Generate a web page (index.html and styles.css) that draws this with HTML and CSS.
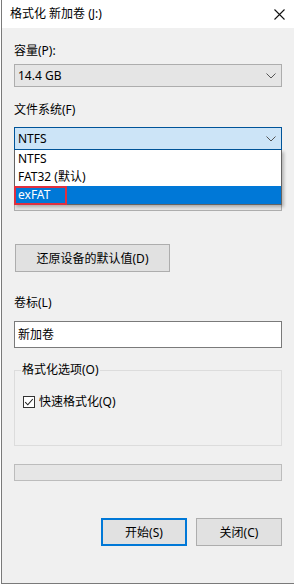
FILE: index.html
```html
<!DOCTYPE html>
<html lang="zh-CN">
<head>
    <meta charset="UTF-8">
    <meta name="viewport" content="width=device-width, initial-scale=1.0">
    <title>格式化 新加卷 (J:)</title>
    <link rel="stylesheet" href="styles.css">
</head>
<body>
    <div class="window">
        <div class="titlebar">
            <span class="title">格式化 新加卷 (J:)</span>
            <svg class="close" width="11" height="11" viewBox="0 0 11 11">
                <path d="M0.5 0.5L10.5 10.5M10.5 0.5L0.5 10.5" stroke="#111" stroke-width="1.1" fill="none"/>
            </svg>
        </div>
        <div class="content">
            <div class="label label-cap">容量(P):</div>
            <div class="combo">
                <span>14.4 GB</span>
                <svg class="chev" width="10" height="6" viewBox="0 0 10 6"><path d="M0.5 0.5L5 5L9.5 0.5" stroke="#555" fill="none"/></svg>
            </div>

            <div class="label label-fs">文件系统(F)</div>
            <div class="fs-wrap">
                <div class="combo combo-focus">
                    <span>NTFS</span>
                    <svg class="chev" width="10" height="6" viewBox="0 0 10 6"><path d="M0.5 0.5L5 5L9.5 0.5" stroke="#555" fill="none"/></svg>
                </div>
                <!-- allocation unit field, covered by the open list -->
                <div class="label label-unit"></div>
                <div class="combo combo-unit"></div>
                <ul class="dropdown">
                    <li>NTFS</li>
                    <li>FAT32 (默认)</li>
                    <li class="selected">exFAT</li>
                    <span class="mark"></span>
                </ul>
            </div>

            <button class="btn btn-restore">还原设备的默认值(D)</button>

            <div class="label label-vol">卷标(L)</div>
            <div class="textbox">新加卷</div>

            <fieldset class="group">
                <legend>格式化选项(O)</legend>
                <div class="check-row">
                    <svg class="checkbox" width="12" height="12" viewBox="0 0 12 12">
                        <rect x="0.5" y="0.5" width="11" height="11" fill="#fff" stroke="#333"/>
                        <path d="M2.2 6.2L4.8 8.8L9.8 3" stroke="#222" stroke-width="1.1" fill="none"/>
                    </svg>
                    <span>快速格式化(Q)</span>
                </div>
            </fieldset>

            <div class="progress"></div>

            <div class="actions">
                <button class="btn btn-action btn-default">开始(S)</button>
                <button class="btn btn-action">关闭(C)</button>
            </div>
        </div>
    </div>
</body>
</html>
```

FILE: styles.css
```css
* {
    margin: 0;
    padding: 0;
    box-sizing: border-box;
}

body {
    background: #fff;
    font-family: "Noto Sans", "Noto Sans CJK SC", sans-serif;
    font-size: 12px;
    color: #000;
}

.window {
    width: 293px;
    height: 584px;
    margin-left: 1px;
    border-left: 1px solid #7a7a7a;
    border-bottom: 1px solid #7a7a7a;
    background: #f0f0f0;
}

.titlebar {
    height: 28px;
    background: #fff;
    display: flex;
    align-items: center;
    justify-content: space-between;
    padding: 0 9px 0 8px;
}

.title {
    line-height: 16px;
}

.content {
    padding: 0 12px;
}

.label {
    line-height: 16px;
    height: 16px;
}

.label-cap {
    margin-top: 15px;
}

.label-fs {
    margin-top: 15px;
}

.label-unit {
    margin-top: 13px;
}

.label-vol {
    margin-top: 23px;
}

.combo {
    height: 23px;
    margin-top: 5px;
    display: flex;
    align-items: center;
    justify-content: space-between;
    padding: 0 5px 0 3px;
    background: #e5e5e5;
    border: 1px solid #adadad;
}

.combo-focus {
    margin-top: 9px;
    background: #cce4f7;
    border-color: #005499;
}

.combo-unit {
    margin-top: 9px;
}

.chev {
    display: block;
}

.fs-wrap {
    position: relative;
}

.dropdown {
    position: absolute;
    top: 23px;
    left: 0;
    right: 0;
    height: 55px;
    list-style: none;
    background: #fff;
    border: 1px solid #646464;
    border-top: none;
    box-shadow: 2px 2px 3px rgba(0, 0, 0, 0.25);
}

.dropdown li {
    height: 18px;
    line-height: 18px;
    padding-left: 3px;
}

.dropdown li.selected {
    background: #0078d7;
    color: #fff;
}

.mark {
    position: absolute;
    left: -1px;
    top: 36px;
    width: 53px;
    height: 19px;
    border: 2px solid #e0303f;
}

.btn {
    font-family: inherit;
    font-size: 12px;
    color: #000;
    background: #e1e1e1;
    border: 1px solid #adadad;
    display: flex;
    align-items: center;
    justify-content: center;
}

.btn-restore {
    width: 155px;
    height: 28px;
    margin-top: 33px;
    margin-left: 1px;
}

.textbox {
    height: 27px;
    margin-top: 10px;
    padding-left: 3px;
    line-height: 25px;
    background: #fff;
    border: 1px solid #7a7a7a;
}

.group {
    height: 84px;
    margin-top: 14px;
    padding: 0 6px;
    border: 1px solid #dcdcdc;
}

.group legend {
    padding: 0 1px;
    line-height: 16px;
    color: #000;
}

.check-row {
    display: flex;
    align-items: center;
    gap: 4px;
    margin-top: 16px;
    margin-left: 2px;
    line-height: 16px;
}

.checkbox {
    display: block;
}

.progress {
    height: 17px;
    margin-top: 18px;
    background: #e6e6e6;
    border: 1px solid #bcbcbc;
}

.actions {
    display: flex;
    justify-content: flex-end;
    gap: 9px;
    margin-top: 37px;
}

.btn-action {
    width: 86px;
    height: 28px;
}

.btn-default {
    border: 2px solid #0078d7;
}
```
